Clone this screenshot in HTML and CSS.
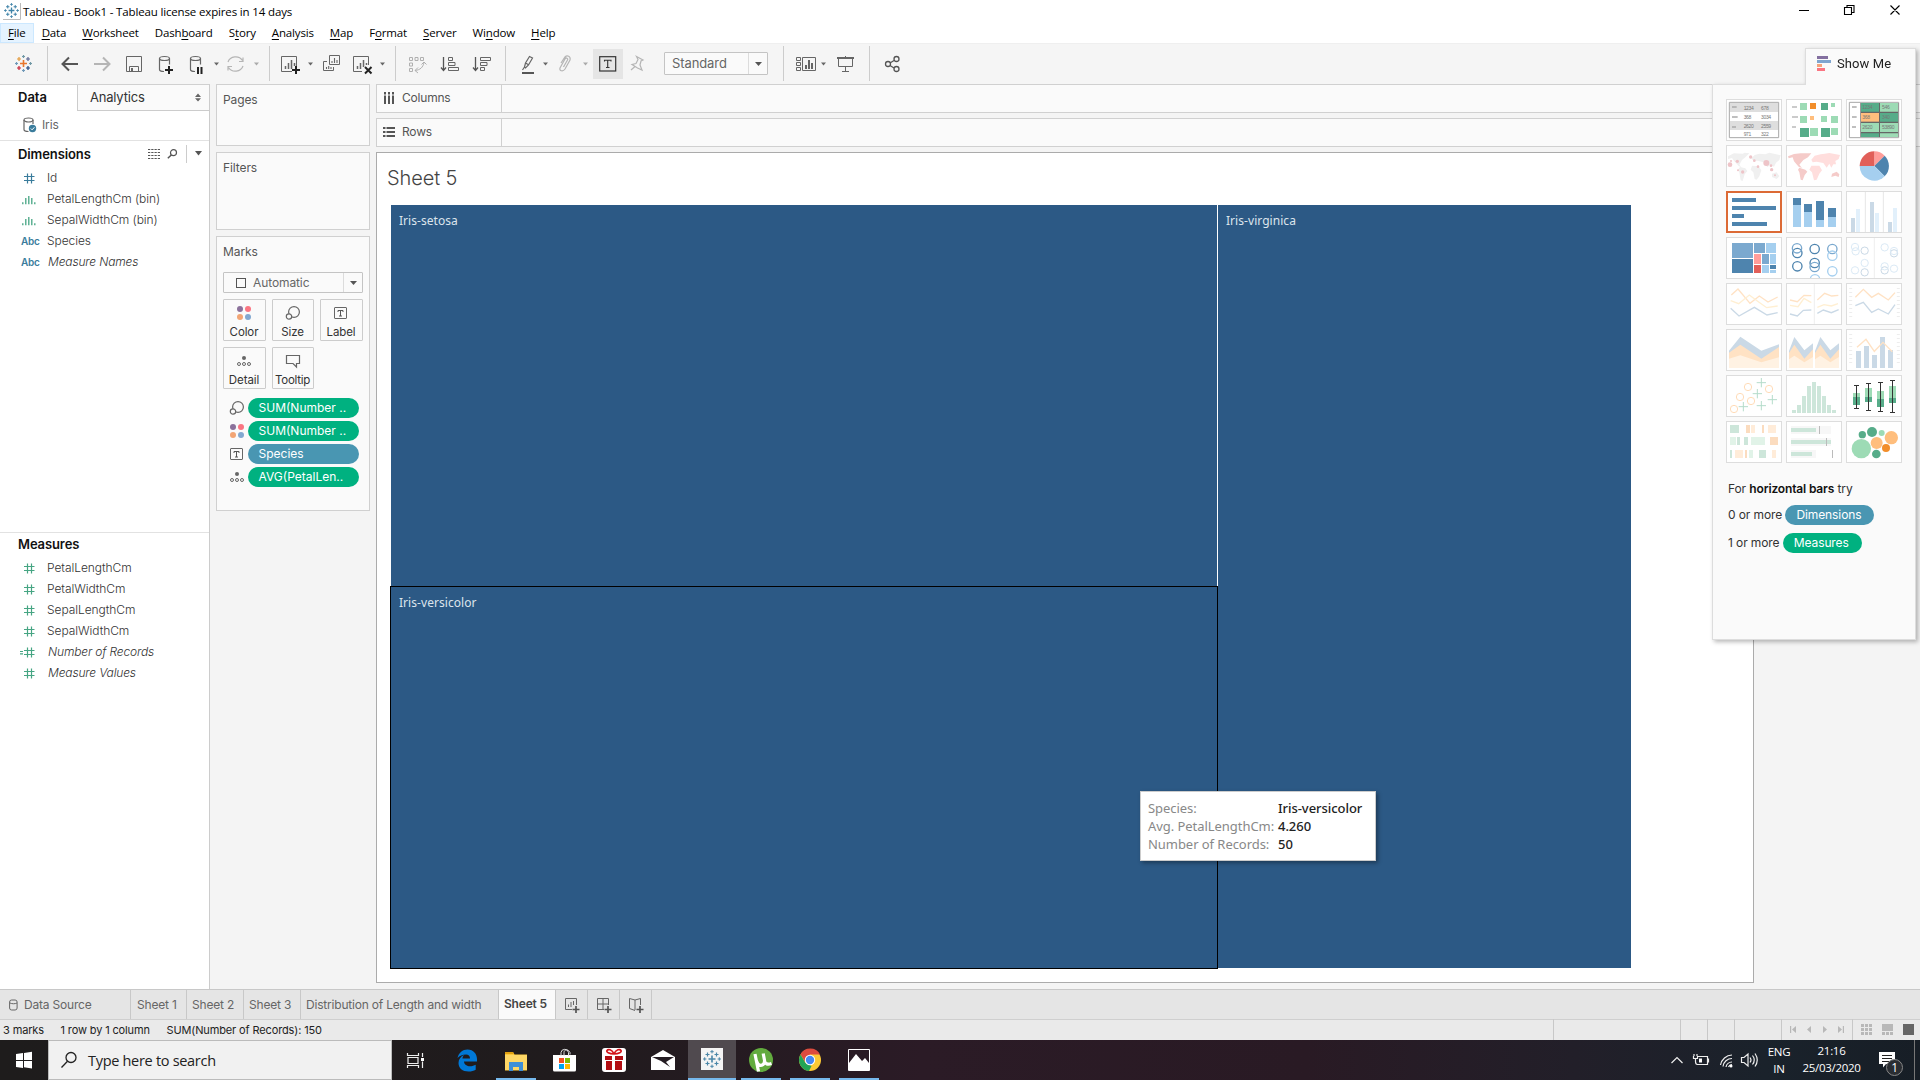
FILE: index.html
```html
<!DOCTYPE html>
<html lang="en">
<head>
<meta charset="utf-8">
<title>Tableau - Book1</title>
<link rel="stylesheet" href="styles.css">
</head>
<body>
<svg class="defs" aria-hidden="true">
  <symbol id="hash" viewBox="0 0 16 14"><path d="M5.5 2.5v10M9.5 2.5v10M2 5.5h10.500M2 9.500h10.500" fill="none" stroke="currentColor" stroke-width="1.2"/></symbol>
  <symbol id="bins" viewBox="0 0 16 14"><path d="M.8 10.300v2M3.800 6v6.300M6.800 4v8.300M9.800 6v6.300M12.800 10.300v2" fill="none" stroke="currentColor" stroke-width="1.300"/></symbol>
  <symbol id="size" viewBox="0 0 16 16"><g fill="none" stroke="#666" stroke-width="1.200"><circle cx="9" cy="7" r="5.400"/><circle cx="4" cy="11.500" r="2.700" fill="#fafafa"/></g></symbol>
  <symbol id="color" viewBox="0 0 16 16"><circle cx="4" cy="4" r="3" fill="#8b719b"/><circle cx="12" cy="4" r="3" fill="#fa7582"/><circle cx="4" cy="12" r="3" fill="#f2a575"/><circle cx="12" cy="12" r="3" fill="#82a8d0"/></symbol>
  <symbol id="label" viewBox="0 0 16 16"><rect x="1.500" y="2.500" width="12" height="11" rx=".5" fill="none" stroke="#666"/><path d="M5 7V5.500h5V7M7.500 5.500v5.500M6 11h3" fill="none" stroke="#555"/></symbol>
  <symbol id="detail" viewBox="0 0 16 16"><circle cx="8" cy="5" r="2" fill="#666"/><g fill="none" stroke="#666"><circle cx="3" cy="11" r="1.500"/><circle cx="8" cy="11" r="1.500"/><circle cx="13" cy="11" r="1.500"/></g></symbol>
  <symbol id="tableau" viewBox="0 0 18 18"><path d="M9 5.500v7M5.500 9h7" stroke-width="1.600"/><path d="M4.500 2.500v4M2.500 4.500h4M13.500 2.500v4M11.500 4.500h4M4.500 11.500v4M2.500 13.500h4M13.500 11.500v4M11.500 13.500h4" stroke-width="1.200"/><path d="M9 0v3.400M7.300 1.700h3.400M9 14.600V18M7.300 16.300h3.400M0 9h3.400M1.700 7.300v3.400M14.600 9H18M16.300 7.300v3.400" stroke-width="1"/></symbol>
</svg>

<header class="titlebar">
  <svg class="app-logo" width="18" height="18"><path d="M0 17.500h17.500V1" fill="none" stroke="#bbb"/><svg x="1" y="1" width="15" height="15" stroke="#3f83a8"><use href="#tableau"/></svg></svg>
  <span class="title-text">Tableau - Book1 - Tableau license expires in 14 days</span>
  <svg class="win-buttons" width="120" height="22" viewBox="1790 0 120 22"><g fill="none" stroke="#000" stroke-width="1.100"><path d="M1799 10.500h10M1844.500 7.500h7v7h-7zM1847 7.500v-2h7v7h-2.500M1890.500 5.500l9 9M1899.500 5.500l-9 9"/></g></svg>
</header>

<nav class="menubar">
  <span class="menu menu-active"><u>F</u>ile</span><span class="menu"><u>D</u>ata</span><span class="menu"><u>W</u>orksheet</span><span class="menu">Dash<u>b</u>oard</span><span class="menu">S<u>t</u>ory</span><span class="menu"><u>A</u>nalysis</span><span class="menu"><u>M</u>ap</span><span class="menu">F<u>o</u>rmat</span><span class="menu"><u>S</u>erver</span><span class="menu">Wi<u>n</u>dow</span><span class="menu"><u>H</u>elp</span>
</nav>

<div class="toolbar">
  <svg width="47" height="41" viewBox="0 43 47 41"><g fill="none" stroke-width="1.200"><path d="M23.500 60v7M20 63.500h7" stroke="#e8762c" stroke-width="1.600"/><path d="M19 57v4M17 59h4" stroke="#e39a3b"/><path d="M28 57v4M26 59h4" stroke="#5b6591"/><path d="M19 66v4M17 68h4" stroke="#c72035"/><path d="M28 66v4M26 68h4" stroke="#1f457e"/><path d="M23.500 55v3M22 56.500h3M30.500 62v3M29 63.500h3" stroke="#7199a6"/><path d="M23.500 69v3M22 70.500h3M16.500 62v3M15 63.500h3" stroke="#7099b8"/></g></svg>
  <i class="sep"></i>
  <svg width="38" height="41" viewBox="48 43 38 41"><path d="M78 64H63M69 57.500L62.500 64l6.500 6.500" fill="none" stroke="#555" stroke-width="2"/></svg>
  <svg width="32" height="41" viewBox="86 43 32 41"><path d="M94 64h15M103 57.500l6.500 6.500-6.500 6.500" fill="none" stroke="#b5b5b5" stroke-width="2"/></svg>
  <svg width="32" height="41" viewBox="118 43 32 41"><path d="M126.500 56.500h15v15h-15zM129.500 71v-4.500h9V71" fill="none" stroke="#666"/><path d="M131 68h2v3h-2z" fill="#666"/></svg>
  <svg width="32" height="41" viewBox="150 43 32 41"><g fill="none" stroke="#666" stroke-width="1.200"><ellipse cx="164.500" cy="58.500" rx="5" ry="2"/><path d="M159.500 58.500v11c0 1.500 2 2 4.500 2M169.500 58.500v6"/></g><path d="M169 66v8M165 70h8" stroke="#222" stroke-width="2"/></svg>
  <svg width="40" height="41" viewBox="182 43 40 41"><g fill="none" stroke="#666" stroke-width="1.200"><ellipse cx="195.500" cy="58.500" rx="5" ry="2"/><path d="M190.500 58.500v11c0 1.500 2 2 4.500 2M200.500 58.500v6"/></g><path d="M198 67v7M201.500 67v7" stroke="#222" stroke-width="2"/><path d="M214 62.500h5l-2.500 3z" fill="#666"/></svg>
  <svg width="47" height="41" viewBox="222 43 47 41"><path d="M228 62a8 7.500 0 0 1 14.500-1.500M243 57.500v4h-4M243 66a8 7.500 0 0 1-14.500 1.500M228 70.500v-4h4" fill="none" stroke="#b5b5b5" stroke-width="1.200"/><path d="M254 62.500h5l-2.500 3z" fill="#aaa"/></svg>
  <i class="sep"></i>
  <svg width="46" height="41" viewBox="270 43 46 41"><path d="M292 71.500h-10.500v-15h15V66" fill="none" stroke="#666"/><path d="M285.500 69v-3M288.500 69v-6M291.500 69v-9M294.500 66v-3" stroke="#666" stroke-width="1.500"/><path d="M296 66v8M292 70h8" stroke="#222" stroke-width="2"/><path d="M308 62.500h5l-2.500 3z" fill="#666"/></svg>
  <svg width="30" height="41" viewBox="316 43 30 41"><path d="M329.500 55.500h10v9h-10zM327 61.500h-3.500v9h10V67" fill="none" stroke="#666"/><path d="M332 63v-2M334.500 63v-5M337 63v-3M326.500 69v-2M328.700 69v-3M331 69v-2" stroke="#666" stroke-width="1.100"/></svg>
  <svg width="49" height="41" viewBox="346 43 49 41"><path d="M362 71.500h-8.500v-15h15V65" fill="none" stroke="#666"/><path d="M357.500 69v-3M360.500 69v-6M363.500 67v-7M366.500 65v-2" stroke="#666" stroke-width="1.500"/><path d="M365 67l6.500 6.500M371.500 67l-6.500 6.500" stroke="#222" stroke-width="2"/><path d="M380 62.500h5l-2.500 3z" fill="#666"/></svg>
  <i class="sep"></i>
  <svg width="37" height="41" viewBox="396 43 37 41"><path d="M409.500 57.500h3v3h-3zM415 57.500h3v3h-3zM420.500 57.500h3v3h-3zM409.500 63h3v3h-3zM409.500 68.500h3v3h-3zM415 70.500c5-.5 8-3 9-8M421.500 64.500l2.500-2.500 2.500 2.500M418 67.500l-3 3 3 2.500" fill="none" stroke="#b0b0b0"/></svg>
  <svg width="33" height="41" viewBox="433 43 33 41"><path d="M443.500 57v13M441 67.500l2.500 3 2.500-3" fill="none" stroke="#555" stroke-width="1.300"/><path d="M448.500 57.500h4v3h-4zM448.500 62.500h6.500v3h-6.500zM448.500 67.500h10v3h-10z" fill="none" stroke="#666"/></svg>
  <svg width="39" height="41" viewBox="466 43 39 41"><path d="M475.500 57v13M473 67.500l2.500 3 2.500-3" fill="none" stroke="#555" stroke-width="1.300"/><path d="M480.500 57.500h10v3h-10zM480.500 62.500h6.500v3h-6.500zM480.500 67.500h4v3h-4z" fill="none" stroke="#666"/></svg>
  <i class="sep"></i>
  <svg width="47" height="41" viewBox="506 43 47 41"><path d="M524.500 67l1-4 4-6.500 3 1.500-4 7-3 3zM525.500 63l3.500 2M524.500 67l-2 3" fill="none" stroke="#666" stroke-width="1.200"/><path d="M522 73h12" stroke="#555" stroke-width="2"/><path d="M543 62.500h5l-2.500 3z" fill="#666"/></svg>
  <svg width="40" height="41" viewBox="553 43 40 41"><path d="M561 63l4-6c2-2 6-1 5 3l-5 9c-2 3-6 2-5-1l5-9c1-2 3.500-.5 2.500 1l-4 7" fill="none" stroke="#b5b5b5" stroke-width="1.200"/><path d="M583 62.500h5l-2.500 3z" fill="#aaa"/></svg>
  <span class="tool-on"><svg width="18" height="16"><rect x=".7" y=".7" width="16" height="14.300" fill="none" stroke="#333" stroke-width="1.200"/><path d="M5.500 5.500V4.200h6.500v1.300M8.700 4.200v7.300M7 11.500h3.500" fill="none" stroke="#333" stroke-width="1.100"/></svg></span>
  <svg width="41" height="41" viewBox="623 43 41 41"><path d="M636.500 56.500l6.500 3.500-2 1-1 4 2 5-4.500-2-5.500-3.500 4-1 2-4zM635 66.500l-4 3.500" fill="none" stroke="#b5b5b5" stroke-width="1.200"/></svg>
  <div class="select fit"><span class="select-text">Standard</span><span class="select-arrow"><svg width="7" height="4"><path d="M0 0h7L3.500 4z" fill="#555"/></svg></span></div>
  <i class="gap15"></i><i class="sep"></i>
  <svg width="46" height="41" viewBox="784 43 46 41"><path d="M796.500 57.500h4v3h-4zM796.500 62.500h4v3h-4zM796.500 67.500h4v3h-4zM802.500 57.500h13v13h-13z" fill="none" stroke="#666"/><path d="M806 69v-4M809 69v-9M812 69v-6" stroke="#666" stroke-width="2"/><path d="M821 62.500h5l-2.500 3z" fill="#666"/></svg>
  <svg width="39" height="41" viewBox="830 43 39 41"><path d="M837 58h17" stroke="#555" stroke-width="1.800"/><path d="M838.500 58.500h14v8h-14zM845.500 56v2M845.500 66.500v5M842 71.500h7" fill="none" stroke="#666"/></svg>
  <i class="sep"></i>
  <svg width="40" height="41" viewBox="870 43 40 41"><g fill="none" stroke="#555" stroke-width="1.300"><circle cx="888" cy="64" r="2.500"/><circle cx="896.500" cy="59" r="2.500"/><circle cx="896.500" cy="69" r="2.500"/><path d="M890 63l4-2.500M890 65.500l4 2.500"/></g></svg>
</div>

<main class="workspace">
  <aside class="data-pane">
    <div class="pane-tabs"><span class="pane-tab on">Data</span><span class="pane-tab">Analytics<svg width="6" height="9"><path d="M0 4L3 .5 6 4zM0 5.200h6L3 8.500z" fill="#666"/></svg></span></div>
    <div class="source"><svg width="15" height="16"><g fill="none" stroke="#666" stroke-width="1.200"><ellipse cx="5.500" cy="3" rx="4.500" ry="2"/><path d="M1 3v9.500c0 1.200 2 2 4.500 2M10 3v4"/></g><circle cx="9.500" cy="11.500" r="3.700" fill="#3a7c9c"/><path d="M7.800 11.500l1.300 1.300 2.300-2.500" fill="none" stroke="#fff"/></svg>Iris</div>
    <section class="dimensions">
      <div class="section-head">Dimensions
        <span class="head-tools"><svg width="12" height="10"><path d="M0 .5h12M0 3.500h12M0 6.500h12M0 9.500h12" stroke="#555" stroke-width="1" stroke-dasharray="2.250 1"/></svg><svg width="11" height="10"><circle cx="6.500" cy="3.700" r="3" fill="none" stroke="#555" stroke-width="1.200"/><path d="M4.300 6L.8 9.300" stroke="#555" stroke-width="1.500"/></svg><i></i><svg width="7" height="5"><path d="M0 0h7L3.500 4.500z" fill="#555"/></svg></span></div>
      <ul class="fields blue">
        <li><svg><use href="#hash"/></svg>Id</li>
        <li class="is-green"><svg><use href="#bins"/></svg>PetalLengthCm (bin)</li>
        <li class="is-green"><svg><use href="#bins"/></svg>SepalWidthCm (bin)</li>
        <li><b>Abc</b>Species</li>
        <li><b>Abc</b><em>Measure Names</em></li>
      </ul>
    </section>
    <section class="measures">
      <div class="section-head">Measures</div>
      <ul class="fields green">
        <li><svg><use href="#hash"/></svg>PetalLengthCm</li>
        <li><svg><use href="#hash"/></svg>PetalWidthCm</li>
        <li><svg><use href="#hash"/></svg>SepalLengthCm</li>
        <li><svg><use href="#hash"/></svg>SepalWidthCm</li>
        <li><svg class="calc"><path d="M7.500 2.500v10M11.500 2.500v10M4 5.500h10.500M4 9.500h10.500M0 6.500h3M0 8.900h3" fill="none" stroke="currentColor" stroke-width="1.200"/></svg><em>Number of Records</em></li>
        <li><svg><use href="#hash"/></svg><em>Measure Values</em></li>
      </ul>
    </section>
  </aside>

  <div class="cards">
    <div class="card card-pages">Pages</div>
    <div class="card card-filters">Filters</div>
    <div class="card card-marks">
      <div class="marks-title">Marks</div>
      <div class="select marks-select"><span class="select-text"><i class="square"></i>Automatic</span><span class="select-arrow"><svg width="7" height="4"><path d="M0 0h7L3.500 4z" fill="#555"/></svg></span></div>
      <div class="mark-buttons">
        <span><svg width="16" height="16"><use href="#color"/></svg>Color</span>
        <span><svg width="16" height="16"><use href="#size"/></svg>Size</span>
        <span><svg width="16" height="16"><use href="#label"/></svg>Label</span>
        <span><svg width="16" height="16"><use href="#detail"/></svg>Detail</span>
        <span class="tight"><svg width="16" height="16"><path d="M1.500 2.500h13v8h-3v3.500l-3.500-3.500H1.500z" fill="none" stroke="#666" stroke-width="1.200"/></svg>Tooltip</span>
      </div>
      <div class="pills">
        <div class="pill-row"><svg width="16" height="16"><use href="#size"/></svg><span class="pill">SUM(Number ..</span></div>
        <div class="pill-row"><svg width="16" height="16"><use href="#color"/></svg><span class="pill">SUM(Number ..</span></div>
        <div class="pill-row"><svg width="16" height="16"><use href="#label"/></svg><span class="pill pill-blue">Species</span></div>
        <div class="pill-row"><svg width="16" height="16"><use href="#detail"/></svg><span class="pill">AVG(PetalLen..</span></div>
      </div>
    </div>
  </div>

  <div class="sheet">
    <div class="shelf"><span class="shelf-label"><svg width="12" height="12"><path d="M2 0v2.500M6 0v2.500M10 0v2.500M2 3.500V12M6 3.500V12M10 3.500V12" stroke="#555" stroke-width="2"/></svg>Columns</span></div>
    <div class="shelf"><span class="shelf-label"><svg width="12" height="12"><path d="M0 2h2.500M0 6h2.500M0 10h2.500M3.500 2H12M3.500 6H12M3.500 10H12" stroke="#555" stroke-width="2"/></svg>Rows</span></div>
    <div class="view">
      <h1>Sheet 5</h1>
      <div class="treemap">
        <div class="mark setosa">Iris-setosa</div>
        <div class="mark versicolor">Iris-versicolor</div>
        <div class="mark virginica">Iris-virginica</div>
      </div>
      <div class="tooltip">
        <span>Species:</span><b>Iris-versicolor</b>
        <span>Avg. PetalLengthCm:</span><b>4.260</b>
        <span>Number of Records:</span><b>50</b>
      </div>
    </div>
  </div>
</main>

<aside class="showme">
  <div class="showme-tab"><svg width="14" height="15"><path d="M0 0h11v3H0z" fill="#8470a0"/><path d="M0 4h14v3H0z" fill="#7fa5cf"/><path d="M0 8h5v3H0z" fill="#f5a47c"/><path d="M0 12h8v3H0z" fill="#fa7582"/></svg>Show Me</div>
  <div class="showme-body">
    <div class="thumbs">
      <svg viewBox="78 177 168 126"><path d="M88 187h148v106H88z" fill="#fff" stroke="#a8a8a8" stroke-width="3"/><path d="M90 189h144v27H90zM90 243h144v27H90z" fill="#dedede"/><path d="M96 201h14M96 231h17M96 261h12" stroke="#aaa" stroke-width="4"/><g class="tiny"><text x="131" y="209">1234</text><text x="183" y="209">678</text><text x="131" y="236">368</text><text x="183" y="236">3034</text><text x="131" y="263">2620</text><text x="183" y="263">2559</text><text x="131" y="287">971</text><text x="183" y="287">322</text></g></svg>
      <svg viewBox="258 177 168 126"><path d="M276 201h15M276 231h18M276 261h12" stroke="#bbb" stroke-width="5"/><path d="M300 189h21v21h-21zM393 189h12v12h-12zM300 228h21v21h-21zM363 228h18v18h-18zM393 228h21v21h-21zM330 264h24v24h-24zM393 264h21v21h-21z" fill="#9ddbb5"/><path d="M363 189h21v21h-21zM300 264h27v27h-27zM363 264h27v27h-27z" fill="#56ac89"/><path d="M330 189h18v18h-18z" fill="#f28e2b"/><path d="M330 228h12v12h-12z" fill="#ffbe7d"/></svg>
      <svg viewBox="438 177 168 126"><path d="M448 187h148v106H448z" fill="#fff" stroke="#a8a8a8" stroke-width="3"/><path d="M481 189h114v102H481z" fill="#666"/><path d="M483 189h54v26h-54zM540 219h54v26h-54zM483 280h54v11h-54z" fill="#56ac89"/><path d="M540 189h54v26h-54zM483 249h54v27h-54zM540 249h54v27h-54zM540 280h54v11h-54z" fill="#9ddbb5"/><path d="M483 219h54v26h-54z" fill="#ffbe7d"/><path d="M456 201h14M456 231h14M456 261h12" stroke="#aaa" stroke-width="4"/><g class="tiny"><text x="487" y="207">1234</text><text x="546" y="207">546</text><text x="487" y="238">368</text><text x="546" y="238">340</text><text x="487" y="268">2620</text><text x="546" y="268">53890</text></g></svg>

      <svg viewBox="78 316 168 126"><path d="M84 350l18-9 26 1 6-3 14 2-12 12-10 8-8 14 6 8-8-4-14-16-6-8-12 3zM120 382l16 4 6 8-8 10-6 20-6-2-4-24-4-8zM154 356l10-10 14-4 18 2 12-5 34 8-4 14-10 8-6 12-12-6-8 8-8-14-20-6-14 0zM156 378l20 2 8 12-6 18-8 10-6-2-4-20-8-8zM216 402l14-4 8 12-8 8-14-6z" fill="#f0f0f0"/><g fill="#eec4c8"><circle cx="90" cy="375" r="7"/><circle cx="112" cy="365" r="5"/><circle cx="93" cy="364" r="3"/><circle cx="152" cy="352" r="5"/><circle cx="163" cy="363" r="4"/><circle cx="174" cy="381" r="4"/><circle cx="199" cy="370" r="9"/><circle cx="213" cy="378" r="4"/><circle cx="215" cy="390" r="5"/><circle cx="128" cy="397" r="5"/><circle cx="114" cy="392" r="3"/><circle cx="225" cy="407" r="3"/></g></svg>
      <svg viewBox="258 316 168 126"><path d="M264 350l18-7 20-2 22 0 10 0-10 12-14 8-12 14 8 10-10-4-14-16-4-12-12 3zM298 384l18 6 6 6-8 10-6 16-6-2-4-22-4-8zM396 402l14-6 8 8-2 8-10-4-12 4z" fill="#f5cbc9"/><path d="M334 360l10-12 18-4 12-2 14-2 32 6-4 12-10 6 2 10-8 0-6 10-6-12-8 12-10-14-20-4-12 2zM334 378l24 0 8 14-8 10-8 18-8 2-6-24-8-8z" fill="#ffdedd"/></svg>
      <svg viewBox="438 316 168 126"><path d="M523 379V335a44 44 0 0 1 31 13z" fill="#ff9d9a"/><path d="M523 379l31-31a44 44 0 0 1 0 62z" fill="#4e84ae"/><path d="M523 379l31 31A44 44 0 0 1 479 379z" fill="#a5cfef"/><path d="M523 379h-44a44 44 0 0 1 44-44z" fill="#e15f59"/></svg>

      <svg class="picked" viewBox="78 453 168 126"><path d="M96 474h72v12H96zM96 498h132v12H96zM96 522h36v12H96zM96 546h105v12H96z" fill="#4e84ae"/></svg>
      <svg viewBox="258 453 168 126"><path d="M279 474h24v21h-24zM312 492h24v24h-24zM348 483h24v57h-24zM384 504h24v27h-24z" fill="#4e84ae"/><path d="M279 495h24v66h-24zM312 516h24v45h-24zM348 540h24v21h-24zM384 531h24v30h-24z" fill="#a5cfef"/></svg>
      <svg viewBox="438 453 168 126"><path d="M496 456v120M550 456v120" stroke="#e6e6e6" stroke-width="3"/><path d="M453 534h12v42h-12zM510 486h12v90h-12zM564 546h12v30h-12z" fill="#cad9e6"/><path d="M468 507h12v69h-12zM525 519h12v57h-12zM579 504h12v72h-12z" fill="#e2f0fb"/></svg>

      <svg viewBox="78 591 168 126"><path d="M96 609h63v45H96zM162 609h33v30h-33zM186 642h21v30h-21z" fill="#7ba9cf"/><path d="M96 657h63v42H96zM210 675h18v12h-18z" fill="#4e84ae"/><path d="M198 609h30v30h-30zM210 642h18v30h-18zM186 675h21v24h-21zM210 690h18v9h-18z" fill="#a5cfef"/><path d="M162 642h21v30h-21z" fill="#ff9d9a"/><path d="M162 675h21v24h-21z" fill="#e15f59"/></svg>
      <svg viewBox="258 591 168 126" fill="none" stroke-width="4"><g stroke="#4e84ae"><circle cx="292" cy="639" r="14"/><circle cx="292" cy="679" r="14"/><circle cx="344" cy="627" r="14"/><circle cx="344" cy="669" r="14"/></g><g stroke="#7ba9cf"><circle cx="291" cy="625" r="14"/><circle cx="344" cy="681" r="14"/><circle cx="397" cy="627" r="14"/></g><g stroke="#a5cfef"><circle cx="397" cy="647" r="14"/><circle cx="397" cy="694" r="14"/><circle cx="345" cy="718" r="14"/></g></svg>
      <svg viewBox="438 591 168 126" fill="none" stroke-width="3"><path d="M523 593v122" stroke="#eee"/><g stroke="#cad9e6"><circle cx="494" cy="632" r="11"/><circle cx="494" cy="697" r="11"/><circle cx="582" cy="640" r="11"/><circle cx="554" cy="691" r="11"/></g><g stroke="#dbeaf6"><circle cx="465" cy="621" r="11"/><circle cx="467" cy="634" r="11"/><circle cx="494" cy="669" r="11"/><circle cx="465" cy="691" r="11"/><circle cx="554" cy="622" r="11"/><circle cx="582" cy="633" r="11"/><circle cx="554" cy="679" r="11"/><circle cx="582" cy="686" r="11"/></g></svg>

      <svg viewBox="78 729 168 126" fill="none" stroke-width="4"><path d="M94 765l20-18 36 43 28-22 26 18 29-15" stroke="#ffe2c4"/><path d="M92 782l24 9 32-26 27 20 25 18 33-5" stroke="#ffefd2"/><path d="M92 805l25 23 46-26 38 23 32-7" stroke="#cad9e6"/></svg>
      <svg viewBox="258 729 168 126" fill="none" stroke-width="4"><path d="M343 731v122" stroke="#eee" stroke-width="3"/><path d="M270 780l22 5 20-19 22 1M352 780l22-20 21 8 20-2" stroke="#ffe2c4"/><path d="M270 796l24 4 18-25 22 13M352 802l20-8 22 4 20-7" stroke="#ffefd2"/><path d="M270 822l22 6 18-17 24-1M352 820l18-10 24 8 22-9" stroke="#cad9e6"/></svg>
      <svg viewBox="438 729 168 126" fill="none" stroke-width="4"><path d="M466 772l24-24 25 24 20-12 30 20 20-22" stroke="#ffe2c4"/><path d="M466 797l24-10 25 30 20-10 30 15 20-28" stroke="#cad9e6"/><path d="M452 744v96M595 744v96" stroke="#ededed" stroke-width="9" stroke-dasharray="3 9"/></svg>

      <svg viewBox="78 27 168 126"><path d="M87 92l34-42 63 42 53-19v71H87z" fill="#cad9e6"/><path d="M87 98l34-24 63 42 53-35v63H87z" fill="#ffe2c4"/><path d="M87 116l34-10 63 21 53-15v32H87z" fill="#fff2e3"/></svg>
      <svg viewBox="258 27 168 126"><path d="M267 93l16-42 30 40 26-21v74h-72zM345 93l16-42 30 40 26-21v74h-72z" fill="#cad9e6"/><path d="M267 99l16-25 30 42 26-28v56h-72zM345 99l16-25 30 42 26-28v56h-72z" fill="#ffe2c4"/><path d="M267 118l16-11 30 20 26-16v33h-72zM345 118l16-11 30 20 26-16v33h-72z" fill="#fff2e3"/></svg>
      <svg viewBox="438 27 168 126"><path d="M468 93h15v51h-15zM492 78h15v66h-15zM516 105h15v39h-15zM540 51h15v93h-15zM564 90h15v54h-15z" fill="#cad9e6"/><path d="M471 82l27-24 25 36 26-27 28 28" fill="none" stroke="#ffe2c4" stroke-width="4"/><path d="M452 42v96M595 42v96" stroke="#ededed" stroke-width="9" stroke-dasharray="3 9"/></svg>

      <svg viewBox="78 165 168 126" fill="none" stroke-width="3"><g stroke="#ffdcb8"><circle cx="144" cy="201" r="11"/><circle cx="207" cy="207" r="11"/><circle cx="120" cy="231" r="11"/><circle cx="153" cy="243" r="11"/><circle cx="102" cy="267" r="11"/></g><path d="M184 174v28M170 188h28M172 207v28M158 221h28M217 225v28M203 239h28M130 246v28M116 260h28M184 243v28M170 257h28" stroke="#b5dccb"/></svg>
      <svg viewBox="258 165 168 126"><path d="M276 270h12v9h-12zM291 255h12v24h-12zM306 228h12v51h-12zM321 198h12v81h-12zM336 186h12v93h-12zM351 198h12v81h-12zM366 228h12v51h-12zM381 255h12v24h-12zM396 270h12v9h-12z" fill="#cde6da"/></svg>
      <svg viewBox="438 165 168 126"><path d="M459 219h21v12h-21zM495 204h21v27h-21zM531 213h21v24h-21zM567 198h21v36h-21z" fill="#9ddbb5"/><path d="M459 231h21v24h-21zM495 231h21v15h-21zM531 237h21v24h-21zM567 234h21v15h-21z" fill="#56ac89"/><path d="M469.500 196v69M462 196.500h15M462 265.500h15M505.500 190v81M498 190.500h15M498 271.500h15M541.500 187v87M534 187.500h15M534 274.500h15M577.500 181v96M570 181.500h15M570 277.500h15" stroke="#333" stroke-width="3"/></svg>

      <svg viewBox="78 303 168 126"><path d="M90 315h27v24H90zM111 351h9v24h-9zM132 351h12v24h-12zM90 390h6v24h-6zM177 390h21v24h-21z" fill="#cde6da"/><path d="M90 351h18v24H90zM153 351h42v24h-42zM147 390h12v24h-12z" fill="#e1f3e8"/><path d="M138 315h12v24h-12zM186 315h6v24h-6zM210 351h24v24h-24zM135 390h6v24h-6z" fill="#fbdcbf"/><path d="M153 315h12v24h-12zM204 315h24v24h-24zM105 390h24v24h-24zM216 390h12v24h-12z" fill="#ffecd9"/></svg>
      <svg viewBox="258 303 168 126"><path d="M273 318h120v24H273zM273 354h120v24H273zM273 390h75v24h-75z" fill="#f7f7f7"/><path d="M273 324h75v12h-75zM273 360h120v12H273zM273 396h63v12h-63z" fill="#cde6da"/><path d="M358.500 318v24M379.500 354v24M397.500 390v24" stroke="#bbb" stroke-width="3"/></svg>
      <svg viewBox="438 303 168 126"><circle cx="484" cy="386" r="29" fill="#9ddbb5"/><circle cx="545" cy="339" r="9" fill="#9ddbb5"/><g fill="#56ac89"><circle cx="487" cy="344" r="11"/><circle cx="516" cy="336" r="15"/><circle cx="529" cy="402" r="13"/></g><circle cx="574" cy="353" r="20" fill="#ffbe7d"/><circle cx="530" cy="369" r="18" fill="#ffbe7d"/><circle cx="558" cy="384" r="12" fill="#f28e2b"/></svg>
    </div>
    <p class="hint hint-title">For <b>horizontal bars</b> try</p>
    <p class="hint">0 or more <span class="chip chip-blue">Dimensions</span></p>
    <p class="hint">1 or more <span class="chip">Measures</span></p>
  </div>
</aside>

<nav class="sheet-tabs">
  <span class="tab-source"><svg width="9" height="12"><rect x=".6" y="1" width="7.500" height="10" rx="2" fill="none" stroke="#666"/><path d="M1 4c2 1 5 1 7 0" fill="none" stroke="#666"/></svg>Data Source</span>
  <span class="tab-s1">Sheet 1</span><span class="tab-s2">Sheet 2</span><span class="tab-s2">Sheet 3</span><span class="tab-dist">Distribution of Length and width</span><span class="tab-on">Sheet 5</span>
  <span class="tab-new"><svg width="16" height="16"><path d="M8 12.500H1.500v-11h11V8" fill="none" stroke="#666"/><path d="M4.500 10V7.500M7 10V5M9.500 8V4" stroke="#666"/><path d="M12 9v7M8.500 12.500h7" stroke="#555" stroke-width="1.700"/></svg></span>
  <span class="tab-new"><svg width="16" height="16"><path d="M8 12.500H1.500v-11h11V8M7 1.500v11M1.500 7h11" fill="none" stroke="#666"/><path d="M12 9v7M8.500 12.500h7" stroke="#555" stroke-width="1.700"/></svg></span>
  <span class="tab-new"><svg width="16" height="16"><path d="M7 13.500l-5.500-2v-10L7 3l5.500-1.500V8M7 3v10" fill="none" stroke="#666"/><path d="M12 9v7M8.500 12.500h7" stroke="#555" stroke-width="1.700"/></svg></span>
</nav>

<footer class="status">
  <span class="st-marks">3 marks</span><span class="st-rows">1 row by 1 column</span><span>SUM(Number of Records): 150</span>
  <svg class="status-right" width="367" height="21" viewBox="1553 1019 367 21"><path d="M1553.500 1019v21M1680.500 1019v21M1707.500 1019v21M1734.500 1019v21M1781.500 1019v21M1852.500 1019v21" stroke="#c8c8c8"/><g fill="#b8b8b8"><path d="M1790 1026h1.200v7h-1.200zM1796 1026v7l-4-3.500zM1811 1026v7l-4-3.500zM1823 1026v7l4-3.500zM1838 1026v7l4-3.500zM1842.800 1026h1.200v7h-1.200z"/><path d="M1861 1024h3v3h-3zM1865 1024h3v3h-3zM1869 1024h3v3h-3zM1861 1028h3v3h-3zM1865 1028h3v3h-3zM1869 1028h3v3h-3zM1861 1032h3v3h-3zM1865 1032h3v3h-3zM1869 1032h3v3h-3zM1882 1024h11v7h-11zM1882 1032h3v3h-3zM1886 1032h3v3h-3zM1890 1032h3v3h-3z"/></g><path d="M1903 1024h11v11h-11z" fill="#666"/></svg>
</footer>

<footer class="taskbar">
  <svg width="48" height="40" viewBox="0 1040 48 40"><path d="M16 1054l7-1v7h-7zM24 1052.900l8-1.200v8.300h-8zM16 1061h7v7l-7-1zM24 1061h8v7.500l-8-1.200z" fill="#fff"/></svg>
  <div class="search"><svg width="18" height="18"><circle cx="11" cy="6.500" r="5" fill="none" stroke="#222" stroke-width="1.300"/><path d="M7.500 10.200L1.500 16.500" stroke="#222" stroke-width="1.300"/></svg><span>Type here to search</span></div>
  <svg width="296" height="40" viewBox="392 1040 296 40">
    <path d="M407.500 1053v2.500h11V1053M407.500 1068v-2.500h11v2.500M408 1057.500h10v6h-10zM422.500 1053v4M422.500 1061.500v6.500" fill="none" stroke="#eee" stroke-width="1.200"/><path d="M421 1058h3v3h-3z" fill="#fff"/>
    <path d="M457.500 1058c1.500-5.500 5-8.500 10-8.500 6 0 9.500 4.500 9.500 9.500v2.500h-13c.3 3.300 3 4.700 6 4.700 2.200 0 4.200-.6 5.700-1.500v5c-2 1.200-4.200 1.800-7.200 1.800-6 0-10-3.500-10-8.500 0-3.800 2.300-6.500 5.500-8-1 1.200-1.500 2.300-1.600 3.500h7.600c0-2.500-1.500-4-4-4-3.500 0-6.500 1.500-8.500 3.500z" fill="#0078d7"/>
    <path d="M505 1052h8l1.500 2.500H527v16h-22z" fill="#fdc93c"/><path d="M505 1052h8l1 2h-9z" fill="#e0a010"/><path d="M505 1055h22v15h-22z" fill="#fed766"/><path d="M509 1062h14v9h-4v-4h-6v4h-4z" fill="#3f8fd6"/>
    <path d="M553 1055h23v15q0 1.500-1.500 1.500h-20q-1.500 0-1.500-1.500z" fill="#fff"/><path d="M561 1056v-3.500a3.800 3.800 0 0 1 7.500 0v3.500M564 1056v-3.500c0-3 4-4 6 0v2" fill="none" stroke="#ddd"/><path d="M559 1058h5v5h-5z" fill="#f25022"/><path d="M565 1058h5v5h-5z" fill="#7fba00"/><path d="M559 1064h5v5h-5z" fill="#00a4ef"/><path d="M565 1064h5v5h-5z" fill="#ffb900"/>
    <rect x="602" y="1048" width="24" height="24" rx="3" fill="#fff"/><path d="M605 1056h7v4h-7zM615 1056h8v4h-8zM606 1061h6v9h-6zM615 1061h7v9h-7z" fill="#b30f14"/><path d="M614 1054c-2-5-6-5-7-3.500s2 3.500 7 3.500c5 0 8-2 7-3.500s-5-1.500-7 3.500" fill="none" stroke="#d4141a" stroke-width="1.700"/>
    <path d="M651 1057l12-7 12 7v13h-24z" fill="#fff"/><path d="M652 1057h22l-8 5 4 5-9-6z" fill="#241c22"/>
    <path d="M496 1078h40v2h-40z" fill="#76b9ed"/>
  </svg>
  <span class="task-on"><svg width="24" height="24"><path d="M1 1h22v22H1z" fill="#f4f4f4"/><svg x="3" y="3" width="18" height="18" stroke="#4a86a8"><use href="#tableau"/></svg></svg></span>
  <svg width="160" height="40" viewBox="736 1040 160 40">
    <circle cx="761" cy="1060" r="12" fill="#62ab3e"/><path d="M755 1054l3.500 17.500M756.500 1061q1.500 5 5 4.200t3-5l-1.300-6.700M764.500 1061q1 4.500 7 2.500" fill="none" stroke="#fff" stroke-width="3.200"/>
    <circle cx="810" cy="1060" r="11" fill="#fcc934"/><path d="M800.500 1054.500a11 11 0 0 1 19.500 0l-10 0-4.500 8z" fill="#dd4b3e"/><path d="M800.500 1054.500l5 8.500 6 3-2.500 5a11 11 0 0 1-8.500-16.500z" fill="#23a455"/><circle cx="810" cy="1060" r="5.200" fill="#fff"/><circle cx="810" cy="1060" r="4.200" fill="#4688f1"/>
    <path d="M848.500 1049.500h21v21h-21z" fill="none" stroke="#fff"/><path d="M849 1070v-7l7-9 6 7 3-3 4 5v7z" fill="#fff"/>
    <path d="M741 1078h40v2h-40zM790 1078h40v2h-40zM839 1078h40v2h-40z" fill="#76b9ed"/>
  </svg>
  <div class="tray">
    <svg width="100" height="40" viewBox="1664 1040 100 40"><g fill="none" stroke="#eee" stroke-width="1.200"><path d="M1671.500 1063l5.500-5.500 5.500 5.500M1697 1056.500h10.500v8h-10.500M1708.500 1058.500v4M1693.500 1056v2.500h4V1056M1695.500 1058.500v3q0 3 2 3M1694 1054v2M1697 1054v2"/><path d="M1720.500 1065a12 12 0 0 1 11.500-10M1723 1066.500a9 9 0 0 1 9-8M1726 1067a6 6 0 0 1 6-5M1728.500 1067a4 4 0 0 1 3.500-2.500"/><path d="M1741.500 1057.500h2.500l4-3.500v12l-4-3.500h-2.500zM1750 1057.500q2 2.500 0 5M1752.500 1055.500q3.500 4.500 0 9M1755 1053.500q4.500 6.500 0 13"/></g><path d="M1699 1058.500h3v4h-3z" fill="#fff"/><circle cx="1731" cy="1066" r="1.500" fill="#fff"/></svg>
    <span class="lang">ENG<br>IN</span>
    <span class="clock">21:16<br>25/03/2020</span>
    <svg class="action" width="42" height="40" viewBox="1872 1040 42 40"><path d="M1879 1052h16v12h-9l-3 3.500v-3.500h-4z" fill="#fff"/><path d="M1882 1055.500h10M1882 1058.500h10M1882 1061.500h7" stroke="#222"/><circle cx="1894.500" cy="1067.500" r="8" fill="#2a2d32" stroke="#888"/><text x="1894.500" y="1072" text-anchor="middle" fill="#fff" font-size="12">1</text></svg>
    <i class="peek"></i>
  </div>
</footer>
</body>
</html>
```
FILE: styles.css
```css
* { box-sizing: border-box; }
body { margin: 0; width: 1920px; height: 1080px; overflow: hidden; position: relative; display: flex; flex-direction: column; background: #f4f4f4; font: 400 12px/16px Inter, "Liberation Sans", sans-serif; color: #333; letter-spacing: -0.1px; }
svg { display: block; flex: none; }
i { flex: none; }
ul, h1, p { margin: 0; padding: 0; list-style: none; }
.defs { position: absolute; width: 0; height: 0; }
.defs symbol { overflow: visible; }

.titlebar { height: 23px; flex: none; background: #fff; display: flex; align-items: flex-start; padding: 2px 10px 0 3px; font: 11.5px/20px "Open Sans", sans-serif; letter-spacing: -0.15px; color: #000; }
.title-text { margin-left: 2px; }
.win-buttons { margin: -2px 0 0 auto; }

.menubar { height: 20px; flex: none; background: #fff; display: flex; font: 11.5px/20px "Open Sans", sans-serif; letter-spacing: -0.15px; color: #000; }
.menu { padding: 0 8px; white-space: nowrap; }
.menu u { text-underline-offset: 2px; }
.menu-active { background: #e5f3ff; box-shadow: inset 0 0 0 1px #cce8ff; }

.toolbar { height: 41px; flex: none; display: flex; align-items: center; background: #f5f5f5; box-shadow: inset 0 1px #efefef; }
.sep { width: 1px; height: 35px; background: #ccc; }
.gap15 { width: 15px; }
.tool-on { width: 30px; height: 30px; background: #e5e5e5; display: grid; place-items: center; }
.select { display: flex; align-items: stretch; background: #fafafa; border: 1px solid #c4c4c4; border-radius: 1px; color: #666; }
.select.fit { width: 104px; height: 23px; font-size: 13px; }
.select-text { flex: 1; padding-left: 7px; display: flex; align-items: center; }
.fit .select-text { padding-bottom: 1px; }
.select-arrow { width: 19px; border-left: 1px solid #dcdcdc; display: grid; place-items: center; }

.workspace { height: 905px; flex: none; display: flex; }
.data-pane { width: 210px; border-right: 1px solid #ccc; border-top: 1px solid #d0d0d0; background: #fff; display: flex; flex-direction: column; }
.pane-tabs { display: flex; height: 26px; font-size: 13px; }
.pane-tab { flex: 1; display: flex; align-items: center; justify-content: space-between; padding: 0 8px 1px 12px; border-left: 1px solid #ccc; border-bottom: 1px solid #ccc; background: #fafafa; letter-spacing: -0.2px; color: #333; }
.pane-tab.on { flex: 0 0 77px; border: 0; background: #fff; font-weight: 600; padding: 0 0 2px 18px; letter-spacing: 0; color: #111; }
.source { height: 30px; display: flex; align-items: center; gap: 4px; padding: 0 0 2px 23px; border-bottom: 1px solid #e2e2e2; color: #666; }
.dimensions { height: 391px; }
.measures { flex: 1; border-top: 1px solid #e2e2e2; }
.section-head { height: 26px; display: flex; align-items: center; justify-content: space-between; padding: 0 7px 1px 18px; font-weight: 600; font-size: 13px; letter-spacing: -0.1px; color: #111; }
.measures .section-head { height: 24px; padding-bottom: 2px; }
.head-tools { display: flex; align-items: center; }
.head-tools svg:nth-child(2) { margin-left: 7px; }
.head-tools i { width: 1px; height: 18px; background: #ccc; margin: 0 8px; }
.fields li { height: 21px; display: flex; align-items: center; color: #333; font-weight: 350; letter-spacing: -0.06px; }
.fields svg, .fields b { width: 16px; height: 14px; margin: 0 9px 0 22px; color: #3a7c9c; overflow: visible; }
.fields.green svg, .is-green svg { color: #46a583; }
.fields .calc { margin-left: 20px; width: 18px; }
.fields b { font-size: 10px; line-height: 14px; font-weight: 600; letter-spacing: -0.3px; margin-left: 21px; width: 17px; }
.fields em { letter-spacing: -0.15px; padding-left: 1px; }

.cards { width: 160px; padding: 0 0 0 6px; display: flex; flex-direction: column; gap: 6px; }
.card { background: #fafafa; border: 1px solid #d0d0d0; padding: 7px 6px; color: #555; }
.card-pages { height: 62px; }
.card-filters { height: 78px; }
.card-marks { height: 275px; }
.marks-title { height: 28px; }
.marks-select { height: 21px; }
.marks-select .select-text { padding-left: 6px; }
.marks-select .square { width: 10px; height: 10px; border: 1px solid #555; margin: 0 7px 0 6px; }
.mark-buttons { margin-top: 6px; display: grid; grid-template-columns: 43px 42px 43px; gap: 6px; }
.mark-buttons span { height: 42px; border: 1px solid #ccc; border-radius: 1px; display: flex; flex-direction: column; align-items: center; padding: 5px 1px 0 0; gap: 3px; font-size: 11.500px; color: #333; }
.mark-buttons .tight { letter-spacing: -0.3px; }
.pills { margin-top: 9px; display: grid; gap: 3px; padding: 0 4px 0 6px; }
.pill-row { display: flex; align-items: center; gap: 3px; }
.pill { flex: 1; height: 20px; border-radius: 10px; background: #00b180; color: #fff; padding: 2px 0 0 10.500px; letter-spacing: 0; }
.pill-blue { background: #4996b2; }

.sheet { flex: 1; margin-left: 6px; display: flex; flex-direction: column; gap: 5px; }
.shelf { height: 29px; background: #fafafa; border: 1px solid #d0d0d0; border-right: 0; display: flex; }
.shelf-label { width: 125px; border-right: 1px solid #d0d0d0; display: flex; align-items: center; gap: 7px; padding: 0 0 2px 6px; letter-spacing: -0.2px; color: #555; }
.view { width: 1378px; height: 831px; background: #fff; border: 1px solid #ababab; position: relative; padding: 12px 0 0 11px; }
.view h1 { font: 300 20px/26px Inter, sans-serif; letter-spacing: -0.1px; color: #444; height: 40px; margin-left: -1px; }
.treemap { width: 1240px; height: 763px; margin-left: 3px; display: grid; grid-template: 381px 382px / 827px 413px; }
.mark { background: #2c5985; color: #dde5ed; font-family: "Noto Sans", sans-serif; letter-spacing: 0.05px; padding: 8px; }
.setosa { border-right: 1px solid #fff; }
.versicolor { grid-row: 2; border: 1px solid #000; margin: 0 0 -1px -1px; z-index: 1; }
.virginica { grid-column: 2; grid-row: 1 / 3; }
.tooltip { position: absolute; left: 763px; top: 638px; width: 236px; height: 70px; z-index: 2; background: #fff; border: 1px solid #ccc; box-shadow: 2px 2px 4px rgba(0,0,0,.35); padding: 7px; display: grid; grid-template-columns: 130px 1fr; grid-auto-rows: 18px; font: 13px/18px "Noto Sans", sans-serif; letter-spacing: -0.05px; color: #888; white-space: nowrap; }
.tooltip b { font-weight: 500; color: #222; }

.showme { position: absolute; left: 1712px; top: 48px; width: 204px; filter: drop-shadow(2px 2px 2px rgba(0,0,0,.28)); }
.showme-tab { position: relative; z-index: 1; margin-left: 93px; width: 111px; height: 37px; background: #fafafa; border: 1px solid #ddd; border-bottom: 0; display: flex; align-items: center; gap: 6px; padding: 0 0 7px 11px; font: 13px/16px Roboto, sans-serif; color: #222; letter-spacing: 0.1px; }
.showme-body { height: 556px; margin-top: -1px; background: #fafafa; border: 1px solid #ddd; padding: 14px 13px; }
.thumbs { display: grid; grid-template-columns: repeat(3, 56px); gap: 4px; margin-bottom: 16px; }
.thumbs svg { width: 56px; height: 42px; background: #fff; outline: 1px solid #ddd; outline-offset: -1px; }
.thumbs .picked { outline: 2px solid #dc6a35; outline-offset: -2px; }
.tiny { font: 15px "Liberation Sans", sans-serif; fill: #777; letter-spacing: -1px; }
.hint { height: 28px; line-height: 20px; padding-left: 2px; color: #333; letter-spacing: -0.1px; }
.hint-title { height: 26px; }
.hint b { font-weight: 600; color: #111; letter-spacing: -0.15px; }
.chip { display: inline-block; height: 20px; border-radius: 10px; background: #00b180; color: #fff; padding: 0 13px 0 11px; }
.chip-blue { background: #4996b2; }

.sheet-tabs { height: 31px; flex: none; background: #e5e5e5; border-top: 1px solid #c8c8c8; border-bottom: 1px solid #cfcfcf; display: flex; color: #666; letter-spacing: -0.2px; }
.sheet-tabs span { display: flex; align-items: center; border-right: 1px solid #c8c8c8; padding-left: 5px; white-space: nowrap; }
.sheet-tabs .tab-source { width: 131px; padding-left: 9px; gap: 6px; }
.sheet-tabs .tab-s1 { width: 56px; padding-left: 6px; }
.sheet-tabs .tab-s2 { width: 57px; }
.sheet-tabs .tab-dist { width: 198px; }
.sheet-tabs .tab-on { width: 57px; background: #fafafa; font-weight: 600; color: #444; padding: 0 0 2px 5px; letter-spacing: -0.2px; }
.sheet-tabs .tab-new { width: 32px; padding-left: 8px; }

.status { height: 20px; flex: none; background: #eaeaea; display: flex; align-items: center; padding-left: 3px; font-size: 11px; letter-spacing: -0.13px; color: #222; }
.st-marks { width: 57.500px; }
.st-rows { width: 106px; }
.status-right { margin-left: auto; margin-top: -1px; }

.taskbar { height: 40px; flex: none; display: flex; background: linear-gradient(90deg, #1e1c1c 0, #201b1d 30%, #2b1b26 48%, #291a24 68%, #221f29 82%, #1a222b 92%, #171e26); color: #fff; }
.search { width: 344px; background: #f1f1f1; border: 1px solid #bbb; display: flex; align-items: center; gap: 10px; padding-left: 11px; color: #222; font: 14.500px/20px "Open Sans", sans-serif; letter-spacing: -0.3px; }
.search span { padding-top: 1px; }
.task-on { width: 48px; background: #504a4f; border-bottom: 2px solid #76b9ed; display: grid; place-items: center; padding-right: 1px; }
.tray { margin-left: auto; display: flex; font: 11.500px/17px "Open Sans", sans-serif; letter-spacing: -0.3px; text-align: center; }
.lang { width: 30px; padding-top: 3px; }
.clock { width: 78px; padding: 2px 3px 0 0; }
.peek { width: 6px; border-left: 1px solid #777; }
```
